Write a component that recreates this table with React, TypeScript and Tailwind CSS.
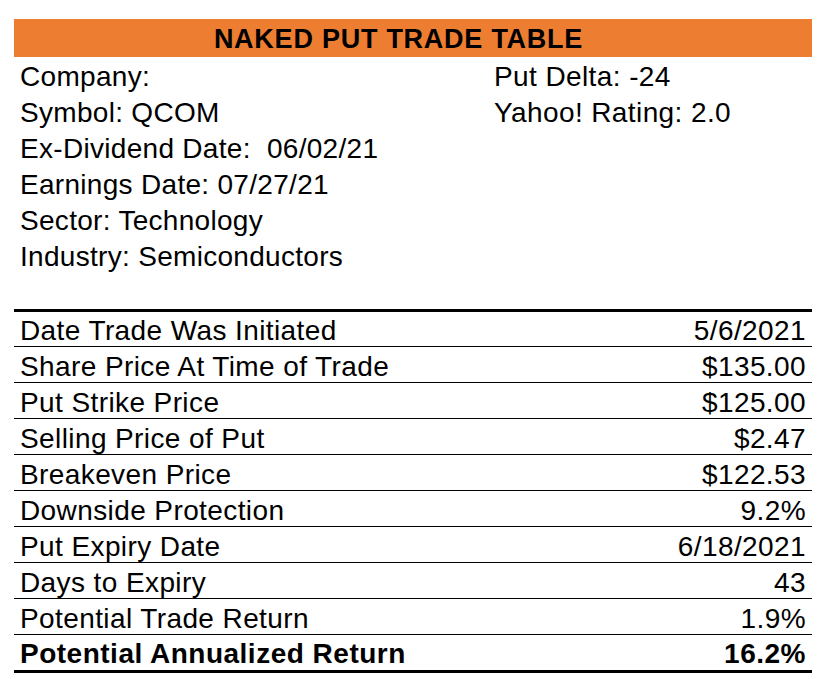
import React from "react";

const rows: [string, string][] = [
  ["Date Trade Was Initiated", "5/6/2021"],
  ["Share Price At Time of Trade", "$135.00"],
  ["Put Strike Price", "$125.00"],
  ["Selling Price of Put", "$2.47"],
  ["Breakeven Price", "$122.53"],
  ["Downside Protection", "9.2%"],
  ["Put Expiry Date", "6/18/2021"],
  ["Days to Expiry", "43"],
  ["Potential Trade Return", "1.9%"],
];

const leftInfo = [
  "Company:",
  "Symbol: QCOM",
  "Ex-Dividend Date:  06/02/21",
  "Earnings Date: 07/27/21",
  "Sector: Technology",
  "Industry: Semiconductors",
  "",
];
const rightInfo = ["Put Delta: -24", "Yahoo! Rating: 2.0", "", "", "", "", ""];

export default function App() {
  return (
    <div
      className="w-[819px] h-[679px] bg-white text-black pt-[19px] pl-[14px]"
      style={{ fontFamily: '"Liberation Sans", Arial, sans-serif' }}
    >
      <div className="w-[798px]">
        <div className="h-[38px] bg-[#ED7D31] flex items-center justify-center pr-[29px] pt-[2px]">
          <span className="text-[27px] font-bold leading-none tracking-[0.75px]">
            NAKED PUT TRADE TABLE
          </span>
        </div>
        <div className="flex">
          <div className="w-[480px] pl-[6px]">
            {leftInfo.map((t, i) => (
              <div
                key={i}
                className="h-[36px] flex items-center pt-[4px] text-[28px] leading-none whitespace-pre tracking-[0.3px]"
              >
                {t}
              </div>
            ))}
          </div>
          <div className="flex-1">
            {rightInfo.map((t, i) => (
              <div
                key={i}
                className="h-[36px] flex items-center pt-[4px] text-[28px] leading-none whitespace-pre tracking-[0.4px]"
              >
                {t}
              </div>
            ))}
          </div>
        </div>
        <div className="border-t-[3px] border-black">
          {rows.map(([k, v], i) => (
            <div
              key={i}
              className={`${i === 0 ? "h-[35px]" : "h-[36px]"} border-b border-black flex items-center justify-between px-[6px] pt-[4px] text-[28px] leading-none tracking-[0.4px]`}
            >
              <span>{k}</span>
              <span>{v}</span>
            </div>
          ))}
          <div className="h-[38px] border-b-[3px] border-black flex items-center justify-between px-[6px] pt-[3px] text-[28px] leading-none font-bold tracking-[0.5px]">
            <span>Potential Annualized Return</span>
            <span>16.2%</span>
          </div>
        </div>
      </div>
    </div>
  );
}
